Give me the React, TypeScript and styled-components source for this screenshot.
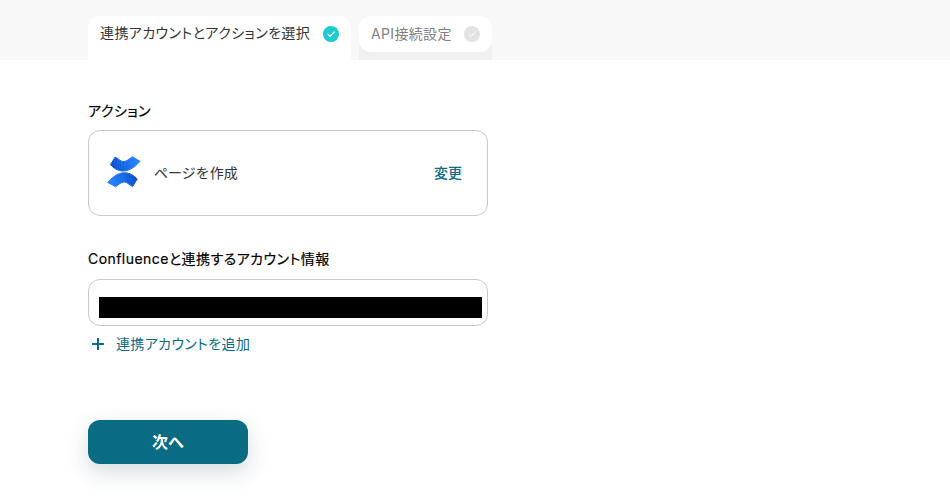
import React from "react";
import styled, { createGlobalStyle } from "styled-components";

const Global = createGlobalStyle`
  html, body { margin: 0; padding: 0; background: #fff; }
  body { font-family: Inter, "Noto Sans CJK JP", sans-serif; color: #222; }
`;

const Page = styled.div`
  width: 950px;
  height: 496px;
  overflow: hidden;
`;

const TabBar = styled.div`
  height: 60px;
  box-sizing: border-box;
  padding: 16px 0 0 88px;
  background: #f8f8f8;
  display: flex;
  gap: 8px;
  align-items: stretch;
`;

const ActiveTab = styled.div`
  width: 263px;
  box-sizing: border-box;
  padding: 0 12px;
  height: 44px;
  background: #fff;
  border-radius: 12px 12px 0 0;
  display: flex;
  justify-content: space-between;
  align-items: flex-start;
  font-size: 14px;
  line-height: 34px;
  font-feature-settings: "palt";
  letter-spacing: 0.4px;
  white-space: nowrap;
  color: #333;
`;

const TabTrack = styled.div`
  width: 133px;
  height: 44px;
  background: #f0f0f0;
  border-radius: 12px 12px 0 0;
`;

const InactiveTab = styled.div`
  height: 36px;
  box-sizing: border-box;
  padding: 0 12px;
  background: #fff;
  border-radius: 12px;
  display: flex;
  justify-content: space-between;
  align-items: center;
  font-size: 14px;
  line-height: 34px;
  letter-spacing: 0.35px;
  white-space: nowrap;
  color: #808080;
`;

const Badge = styled.svg`
  width: 16px;
  height: 16px;
  flex: none;
  align-self: center;
`;

const ActiveBadgeWrap = styled.span`
  height: 36px;
  display: flex;
  align-items: center;
`;

const Content = styled.main`
  padding: 41px 0 0 88px;
  width: 400px;
`;

const Label = styled.div`
  font-size: 14px;
  line-height: 20px;
  font-weight: 400;
  font-feature-settings: "palt";
  letter-spacing: 0.45px;
  color: #000;
  -webkit-text-stroke: 0.2px #000;
`;

const ActionCard = styled.div`
  margin-top: 9px;
  height: 86px;
  box-sizing: border-box;
  border: 1px solid #c9c9c9;
  border-radius: 12px;
  padding: 0 25px 2px 17px;
  display: flex;
  align-items: center;
`;

const LogoSvg = styled.svg`
  flex: none;
  width: 36px;
  height: 36px;
`;

const ActionName = styled.span`
  margin-left: 12px;
  font-size: 14px;
  color: #333;
  flex: 1;
`;

const ChangeLink = styled.span`
  font-size: 14px;
  font-weight: 500;
  color: #0a6b84;
`;

const SectionLabel = styled(Label)`
  margin-top: 33px;
`;

const AccountField = styled.div`
  margin-top: 10px;
  height: 47px;
  box-sizing: border-box;
  border: 1px solid #c9c9c9;
  border-radius: 12px;
  padding: 17px 5px 7px 10px;
`;

const Redaction = styled.div`
  height: 21px;
  background: #000;
`;

const AddRow = styled.div`
  margin-top: 8px;
  display: flex;
  align-items: center;
  gap: 11px;
  padding-left: 3px;
  font-size: 14px;
  line-height: 20px;
  font-feature-settings: "palt";
  letter-spacing: 0.35px;
  color: #0a6b84;
`;

const PlusGlyph = styled.svg`
  flex: none;
  width: 14px;
  height: 14px;
`;

const NextButton = styled.button`
  display: block;
  margin-top: 66px;
  width: 160px;
  height: 44px;
  padding: 0 0 2px;
  border: 0;
  border-radius: 12px;
  background: #0a6b84;
  color: #fff;
  font-family: inherit;
  font-size: 16px;
  font-weight: 700;
  box-shadow: 0 8px 22px rgba(30, 60, 80, 0.18);
`;

const CheckBadge = ({ id, from, to, tick }: { id: string; from: string; to: string; tick: string }) => (
  <Badge viewBox="0 0 16 16">
    <defs>
      <linearGradient id={id} x1="0" y1="1" x2="1" y2="0">
        <stop offset="0" stopColor={from} />
        <stop offset="1" stopColor={to} />
      </linearGradient>
    </defs>
    <circle cx="8" cy="8" r="8" fill={`url(#${id})`} />
    <path d="M5 8.200l2.100 2.100L11.200 6" fill="none" stroke={tick} strokeWidth="1.200" strokeLinecap="round" strokeLinejoin="round" />
  </Badge>
);

const ConfluenceLogo = () => (
  <LogoSvg viewBox="0 0 36 36">
    <defs>
      <linearGradient id="cfTop" gradientUnits="userSpaceOnUse" x1="4" y1="12" x2="30" y2="5">
        <stop offset="0" stopColor="#0b50cc" />
        <stop offset="1" stopColor="#2684ff" />
      </linearGradient>
      <linearGradient id="cfBottom" gradientUnits="userSpaceOnUse" x1="32" y1="24" x2="6" y2="31">
        <stop offset="0" stopColor="#0b50cc" />
        <stop offset="1" stopColor="#2684ff" />
      </linearGradient>
    </defs>
    <path
      d="M9 3.200C12 3.800 14 7.600 17.300 7.600C20.500 7.600 23 5.200 26.300 2.800L34 7.300C30.500 11.500 24 17 17.300 17C12 17 7.500 14 4.500 10.700Z"
      fill="url(#cfTop)"
      stroke="url(#cfTop)"
      strokeWidth="1"
      strokeLinejoin="round"
    />
    <path
      d="M9.700 32.800C12.700 30.400 15.200 28 18.400 28C21.700 28 23.700 31.800 26.700 32.400L31.200 25C28.200 21.700 23.700 18.700 18.400 18.700C11.700 18.700 5.200 24.200 1.700 28.400Z"
      fill="url(#cfBottom)"
      stroke="url(#cfBottom)"
      strokeWidth="1"
      strokeLinejoin="round"
    />
  </LogoSvg>
);

const PlusIcon = () => (
  <PlusGlyph viewBox="0 0 14 14">
    <path d="M7 1v12M1 7h12" stroke="#0a6b84" strokeWidth="2" />
  </PlusGlyph>
);

export default function App() {
  return (
    <Page>
      <Global />
      <TabBar>
        <ActiveTab>
          <span>連携アカウントとアクションを選択</span>
          <ActiveBadgeWrap>
            <CheckBadge id="on" from="#22c3dd" to="#18d2c0" tick="#fff" />
          </ActiveBadgeWrap>
        </ActiveTab>
        <TabTrack>
          <InactiveTab>
            <span>API接続設定</span>
            <CheckBadge id="off" from="#e2e2e2" to="#e2e2e2" tick="#f4f4f4" />
          </InactiveTab>
        </TabTrack>
      </TabBar>
      <Content>
        <Label>アクション</Label>
        <ActionCard>
          <ConfluenceLogo />
          <ActionName>ページを作成</ActionName>
          <ChangeLink>変更</ChangeLink>
        </ActionCard>
        <SectionLabel>Confluenceと連携するアカウント情報</SectionLabel>
        <AccountField>
          <Redaction />
        </AccountField>
        <AddRow>
          <PlusIcon />
          <span>連携アカウントを追加</span>
        </AddRow>
        <NextButton>次へ</NextButton>
      </Content>
    </Page>
  );
}
